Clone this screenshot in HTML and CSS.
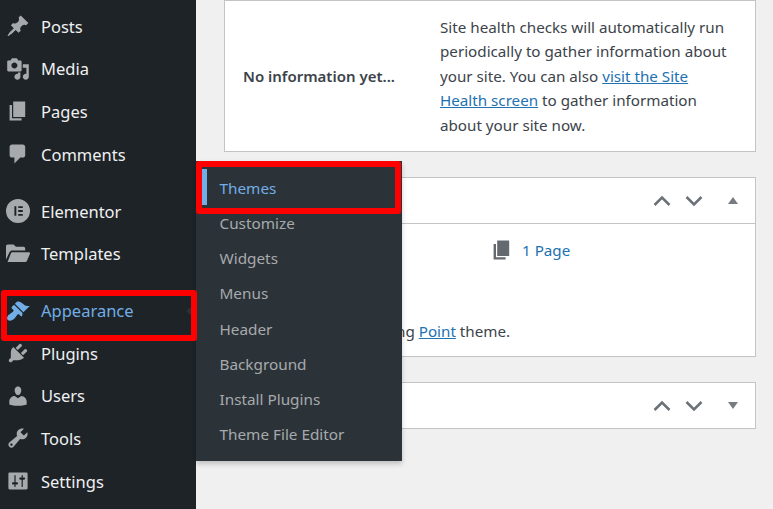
FILE: index.html
```html
<!DOCTYPE html>
<html lang="en">
<head>
<meta charset="utf-8">
<title>Appearance menu</title>
<link rel="stylesheet" href="styles.css">
</head>
<body>
<div class="app">
  <nav class="sidebar">
    <a class="nav-item"><svg class="nav-icon" viewBox="0 0 20 20"><path d="M10.44 3.02l1.82-1.82 6.36 6.35-1.83 1.82c-1.05-.68-2.48-.57-3.41.36l-.75.75c-.92.93-1.04 2.35-.35 3.41l-1.83 1.82-2.41-2.41-2.8 2.79c-.42.42-3.38 2.71-3.8 2.29s1.86-3.39 2.28-3.81l2.79-2.79L4.1 9.36l1.83-1.82c1.05.69 2.48.57 3.41-.36l.75-.75c.93-.92 1.04-2.35.35-3.41z"/></svg><span>Posts</span></a>
    <a class="nav-item"><svg class="nav-icon" viewBox="0 0 20 20"><path d="M13 11V4c0-.55-.45-1-1-1h-1.67L9 1H5L3.67 3H2c-.55 0-1 .45-1 1v7c0 .55.45 1 1 1h10c.55 0 1-.45 1-1zM7 4.500c1.38 0 2.500 1.120 2.500 2.500S8.380 9.500 7 9.500 4.500 8.380 4.500 7 5.620 4.500 7 4.500zM14 6h5v10.500c0 1.380-1.120 2.500-2.500 2.500S14 17.880 14 16.500s1.120-2.500 2.500-2.500c.17 0 .34.02.5.05V9h-3V6zm-4 8.050V13h2v3.500c0 1.380-1.120 2.500-2.500 2.500S7 17.880 7 16.500 8.120 14 9.500 14c.17 0 .34.02.5.05z"/></svg><span>Media</span></a>
    <a class="nav-item"><svg class="nav-icon" viewBox="0 0 20 20"><path d="M6 15V2h10v13H6zm-1 1h8v2H3V5h2v11z"/></svg><span>Pages</span></a>
    <a class="nav-item"><svg class="nav-icon" viewBox="0 0 20 20"><path d="M5 2h9c1.1 0 2 .9 2 2v7c0 1.1-.9 2-2 2h-2l-5 5v-5H5c-1.1 0-2-.9-2-2V4c0-1.1.9-2 2-2z"/></svg><span>Comments</span></a>
    <a class="nav-item nav-group"><svg class="nav-icon" viewBox="0 0 20 20"><path fill-rule="evenodd" d="M10 0a10 10 0 1 0 0 20 10 10 0 0 0 0-20zM7 6h1.600v8H7V6zm3.200 0H14v1.600h-3.800V6zm0 3.200H14v1.600h-3.800V9.200zm0 3.200H14V14h-3.800v-1.600z"/></svg><span>Elementor</span></a>
    <a class="nav-item"><svg class="nav-icon" viewBox="0 0 20 20"><path d="M0 3.500C0 2.700.7 2 1.500 2h4.800l2 2h6.200c.8 0 1.500.7 1.500 1.500V7H5.200c-1 0-1.800.5-2.200 1.400L0 14.500V3.500zM4.200 9.200C4.400 8.800 4.800 8.500 5.300 8.500H19c.8 0 1.200.7.9 1.400l-2.500 6c-.2.500-.7.800-1.200.800H1.300L4.200 9.200z"/></svg><span>Templates</span></a>
    <a class="nav-item nav-group nav-current"><svg class="nav-icon" viewBox="0 0 20 20"><path d="M14.480 11.060L7.410 3.990l1.500-1.500c.5-.56 2.300-.47 3.510.32 1.210.8 1.430 1.280 2.910 2.100 1.180.64 2.450 1.260 4.450.85zm-.71.710L6.700 4.700 4.930 6.470c-.39.39-.39 1.020 0 1.410l1.060 1.060c.39.39.39 1.030 0 1.420-.6.6-1.430 1.110-2.210 1.690-.35.26-.7.53-1.010.84C1.430 13.230.21 15.900 1.500 17.500c1.600 1.300 4.270.08 5.610-1.270.31-.31.58-.66.84-1.010.58-.78 1.090-1.610 1.690-2.210.39-.39 1.020-.39 1.410 0l1.060 1.060c.39.39 1.020.39 1.410 0z"/></svg><span>Appearance</span></a>
    <a class="nav-item"><svg class="nav-icon" viewBox="0 0 20 20"><path d="M13.110 4.360L9.870 7.600 8 5.730l3.240-3.240c.35-.34 1.050-.2 1.560.32.52.51.66 1.210.31 1.550zm-8 1.770l.91-1.120 9.010 9.010-1.190.84c-.71.71-2.630 1.160-3.820 1.160H6.140L4.900 17.260c-.59.59-1.540.59-2.120 0-.59-.58-.59-1.530 0-2.120l1.240-1.240v-3.880c0-1.130.4-3.190 1.090-3.890zm7.260 3.970l3.240-3.240c.34-.35 1.040-.21 1.550.31.52.51.66 1.210.31 1.550l-3.240 3.250z"/></svg><span>Plugins</span></a>
    <a class="nav-item"><svg class="nav-icon" viewBox="0 0 20 20"><path d="M10 9.250c-2.270 0-2.730-3.440-2.730-3.440C7 4.020 7.820 2 9.970 2c2.160 0 2.980 2.020 2.710 3.810 0 0-.41 3.440-2.680 3.440zm0 2.570L12.720 10c2.390 0 4.520 2.330 4.520 4.530v2.490s-3.650 1.130-7.240 1.130c-3.650 0-7.240-1.130-7.240-1.130v-2.490c0-2.250 1.940-4.480 4.470-4.480z"/></svg><span>Users</span></a>
    <a class="nav-item"><svg class="nav-icon" viewBox="0 0 20 20"><path d="M16.680 9.770c-1.340 1.340-3.300 1.670-4.950.99l-5.410 6.520c-.99.99-2.590.99-3.580 0s-.99-2.590 0-3.570l6.520-5.420c-.68-1.650-.35-3.610.99-4.950 1.280-1.280 3.120-1.620 4.720-1.060l-2.890 2.890 2.820 2.820 2.860-2.870c.53 1.580.18 3.390-1.080 4.650zM3.810 16.210c.4.39 1.040.39 1.430 0 .4-.4.4-1.040 0-1.430-.39-.4-1.030-.4-1.430 0-.39.39-.39 1.030 0 1.430z"/></svg><span>Tools</span></a>
    <a class="nav-item"><svg class="nav-icon" viewBox="0 0 20 20"><path d="M18 16V4c0-.55-.45-1-1-1H3c-.55 0-1 .45-1 1v12c0 .55.45 1 1 1h14c.55 0 1-.45 1-1zM8 11h1c.55 0 1 .45 1 1s-.45 1-1 1H8v1.500c0 .28-.22.5-.5.5s-.5-.22-.5-.5V13H6c-.55 0-1-.45-1-1s.45-1 1-1h1V5.500c0-.28.22-.5.5-.5s.5.22.5.5V11zm5-2h-1c-.55 0-1-.45-1-1s.45-1 1-1h1V5.500c0-.28.22-.5.5-.5s.5.22.5.5V7h1c.55 0 1 .45 1 1s-.45 1-1 1h-1v5.500c0 .28-.22.5-.5.5s-.5-.22-.5-.5V9z"/></svg><span>Settings</span></a>
  </nav>

  <main class="content">
    <section class="widget health">
      <strong class="health-title">No information yet...</strong>
      <p class="health-text">Site health checks will automatically run periodically to gather information about your site. You can also <a class="link" href="#">visit the Site Health screen</a> to gather information about your site now.</p>
    </section>

    <section class="widget">
      <header class="widget-head">
        <svg class="chev" viewBox="0 0 18 12"><path d="M1.500 10L9 2.500 16.500 10"/></svg>
        <svg class="chev" viewBox="0 0 18 12"><path d="M1.500 2L9 9.500 16.500 2"/></svg>
        <span class="tri tri-up"></span>
      </header>
      <div class="glance">
        <div class="glance-grid">
          <span></span>
          <a class="glance-item"><svg class="glance-icon" viewBox="0 0 20 20"><path d="M6 15V2h10v13H6zm-1 1h8v2H3V5h2v11z"/></svg>1 Page</a>
        </div>
        <p class="glance-note">WordPress 6.0.2 running <a class="link" href="#">Point</a> theme.</p>
      </div>
    </section>

    <section class="widget">
      <header class="widget-head">
        <svg class="chev" viewBox="0 0 18 12"><path d="M1.500 10L9 2.500 16.500 10"/></svg>
        <svg class="chev" viewBox="0 0 18 12"><path d="M1.500 2L9 9.500 16.500 2"/></svg>
        <span class="tri tri-down"></span>
      </header>
    </section>
  </main>

  <div class="flyout">
    <span class="flyout-bar"></span>
    <a class="fly-item fly-current">Themes</a>
    <a class="fly-item">Customize</a>
    <a class="fly-item">Widgets</a>
    <a class="fly-item">Menus</a>
    <a class="fly-item">Header</a>
    <a class="fly-item">Background</a>
    <a class="fly-item">Install Plugins</a>
    <a class="fly-item">Theme File Editor</a>
  </div>
  <span class="notch"></span>
  <span class="mark mark-appearance"></span>
  <span class="mark mark-themes"></span>
</div>
</body>
</html>
```
FILE: styles.css
```css
* { box-sizing: border-box; }
html, body { margin: 0; height: 100%; overflow: hidden; }
body { font-family: "Noto Sans", "Open Sans", sans-serif; background: #f0f0f1; color: #3c434a; }
.app { position: relative; display: flex; height: 509px; overflow: hidden; }

.sidebar { flex: 0 0 196px; background: #1d2327; padding-top: 5px; }
.nav-item { display: flex; align-items: center; height: 42.6px; padding-left: 6px; gap: 11px; color: #f0f0f1; font-size: 16.5px; }
.nav-group { margin-top: 14.4px; }
.nav-icon { width: 24px; height: 24px; flex: none; fill: #a7aaad; }
.nav-current { color: #72aee6; }
.nav-current .nav-icon { fill: #72aee6; }

.content { flex: 1; padding-left: 28px; padding-right: 17px; display: flex; flex-direction: column; gap: 25px; }
.widget { background: #fff; border: 1px solid #c3c4c7; }
.health { height: 152px; display: grid; grid-template-columns: 215px 1fr; align-items: center; flex: none; }
.health-title { padding-left: 18px; font-size: 15px; font-weight: 600; }
.health-text { margin: 0; font-size: 15.2px; line-height: 24.5px; padding-right: 20px; }
.link { color: #2271b1; text-decoration: underline; }

.widget-head { height: 45px; display: flex; align-items: center; justify-content: flex-end; padding-right: 17px; gap: 14px; }
.chev { width: 18px; height: 12px; fill: none; stroke: #6b7178; stroke-width: 2.5px; }
.tri { width: 0; height: 0; margin-left: 11px; border-left: 5px solid transparent; border-right: 5px solid transparent; }
.tri-up { border-bottom: 7px solid #787c82; }
.tri-down { border-top: 7px solid #787c82; }

.glance { border-top: 1px solid #c3c4c7; height: 133px; padding: 14px 12px 0; }
.glance-grid { display: grid; grid-template-columns: 1fr 1fr; }
.glance-item { display: flex; align-items: center; gap: 8px; height: 24px; color: #2271b1; font-size: 15.2px; }
.glance-icon { width: 24px; height: 24px; flex: none; fill: #646970; }
.glance-note { margin: 57px 0 0 2px; font-size: 15.2px; line-height: 24px; }

.flyout { position: absolute; left: 196px; top: 161px; width: 206px; height: 300px; padding-top: 9.3px; background: #2c3338; box-shadow: 0 3px 5px rgba(0,0,0,.2); display: flex; flex-direction: column; }
.fly-item { height: 35.2px; padding-left: 23.5px; display: flex; align-items: center; color: #a7aaad; font-size: 15.3px; flex: none; }
.fly-current { color: #72aee6; }
.flyout-bar { position: absolute; left: 6px; top: 8px; width: 5px; height: 36px; background: #72aee6; }
.notch { position: absolute; left: 186px; top: 303px; border: 8px solid transparent; border-left: 0; border-right: 10px solid #2c3338; }

.mark { position: absolute; border: 6px solid #f00; border-radius: 3px; }
.mark-appearance { left: 1px; top: 290px; width: 196px; height: 51px; }
.mark-themes { left: 196px; top: 161px; width: 205px; height: 53px; }
```
